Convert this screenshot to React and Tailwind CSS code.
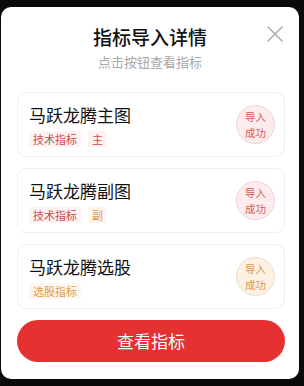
import React from 'react'

const items = [
  { name: '马跃龙腾主图', tags: [{ text: '技术指标', tone: 'red' }, { text: '主', tone: 'red' }], badge: 'red' },
  { name: '马跃龙腾副图', tags: [{ text: '技术指标', tone: 'red' }, { text: '副', tone: 'orange' }], badge: 'red' },
  { name: '马跃龙腾选股', tags: [{ text: '选股指标', tone: 'orange' }], badge: 'orange' },
]

const TAG = {
  red: 'bg-[#fdf3f3] text-[#d2484a]',
  orange: 'bg-[#fdf7ef] text-[#e29a46]',
}

const BADGE = {
  red: 'bg-[#fcecec] border-[#f3d2d2] text-[#d9585a]',
  orange: 'bg-[#fcf1e4] border-[#f2dcc2] text-[#e0964a]',
}

function Card({ item }) {
  return (
    <div className="h-[65px] rounded-[9px] border border-[#efefef] bg-white flex items-center justify-between pl-[11px] pr-[9px]">
      <div className="flex flex-col">
        <div className="text-[17px] leading-[24px] text-[#111]">{item.name}</div>
        <div className="flex gap-[7px] mt-[4px]">
          {item.tags.map((t) => (
            <span key={t.text} className={`text-[11px] leading-[16px] px-[4px] rounded-[2px] ${TAG[t.tone]}`}>
              {t.text}
            </span>
          ))}
        </div>
      </div>
      <div className={`w-[39px] h-[39px] rounded-full border flex flex-col items-center justify-center text-center text-[10.5px] leading-[15.5px] ${BADGE[item.badge]}`}>
        <span>导入</span>
        <span>成功</span>
      </div>
    </div>
  )
}

export default function App() {
  return (
    <div
      className="w-[304px] h-[386px] bg-[#0a0a0a] pt-[7px] pl-[1px]"
      style={{ fontFamily: '"Noto Sans CJK SC", "Noto Sans", sans-serif' }}
    >
      <div className="relative w-[298px] h-[372px] bg-white rounded-[10px] px-[16px] pt-[16px]">
        <button className="absolute right-[16px] top-[19px] w-[16px] h-[16px]">
          <svg viewBox="0 0 16 16" width="16" height="16" fill="none" stroke="#a5a5a5" strokeWidth="1.4" strokeLinecap="round">
            <path d="M1 1L15 15M15 1L1 15" />
          </svg>
        </button>
        <div className="text-center text-[19px] leading-[28px] font-medium text-[#111]">指标导入详情</div>
        <div className="text-center text-[13px] leading-[18px] text-[#a8a8a8] mt-[2px]">点击按钮查看指标</div>
        <div className="flex flex-col gap-[11px] mt-[21px] w-[268px]">
          {items.map((it) => (
            <Card key={it.name} item={it} />
          ))}
          <button className="h-[42px] rounded-full bg-[#e53131] text-white text-[17px]">查看指标</button>
        </div>
      </div>
    </div>
  )
}
